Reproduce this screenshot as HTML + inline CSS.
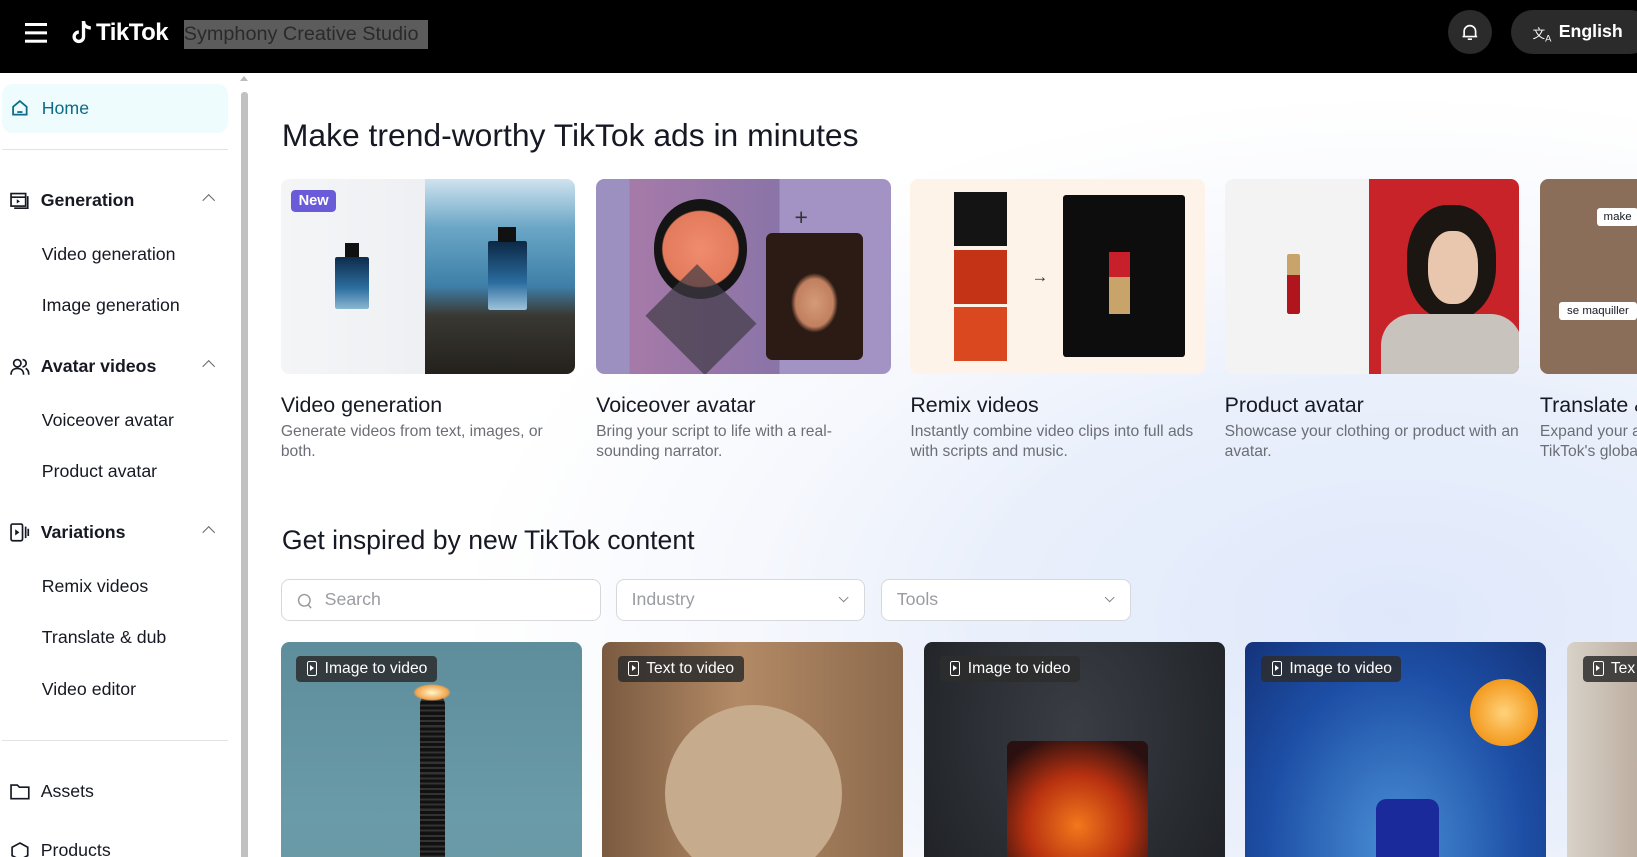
<!DOCTYPE html>
<html><head><meta charset="utf-8">
<style>
html{zoom:1.044}
*{box-sizing:border-box;margin:0;padding:0}
html,body{overflow:hidden}
body{width:1568px;height:821px;font-family:"Liberation Sans",Arial,sans-serif;background:#fff;position:relative;color:#161823}
.hdr{position:absolute;left:0;top:0;width:1568px;height:70px;background:#000}
.abs{position:absolute}
.side div.it{position:absolute;left:40px;font-size:17px;color:#161823}
.side div.grp{position:absolute;left:10px;font-size:17px;font-weight:bold;color:#161823;display:flex;align-items:center;gap:10px;width:200px}
.chev{position:absolute;right:6px;top:6px;width:9px;height:9px;border-left:1.5px solid #666;border-top:1.5px solid #666;transform:rotate(45deg)}
.main{position:absolute;left:240px;top:70px;width:1328px;height:800px;background:radial-gradient(ellipse 900px 500px at 1100px 520px,#dfe8fb 0%,#eaf0fb 45%,#f6f8fd 70%,#fff 100%)}
.card{position:absolute;top:171px;width:282px}
.card .img{height:187px;border-radius:8px;overflow:hidden;position:relative}
.card h3{position:absolute;top:205px;font-size:20.5px;font-weight:normal;color:#161823;white-space:nowrap}
.card p{position:absolute;top:233px;font-size:15px;line-height:19.5px;color:#6b6e75;width:262px}
.vc{position:absolute;top:615px;width:288px;height:280px;border-radius:8px;overflow:hidden}
.tag{position:absolute;left:15px;top:13px;height:25px;padding:0 9px 0 10px;background:rgba(45,45,45,.85);border-radius:4px;color:#fff;font-size:15px;line-height:25px;display:flex;align-items:center;gap:7px}
.tag i{display:inline-block;width:10px;height:14px;border:1.5px solid #fff;border-radius:2px;position:relative}
.tag i:after{content:"";position:absolute;left:2px;top:3px;border-left:4px solid #fff;border-top:3px solid transparent;border-bottom:3px solid transparent}
.f{position:absolute;top:555px;height:40px;background:#fff;border:1px solid #d6d8dc;border-radius:8px;font-size:17px;color:#9a9ca2;padding-left:14px;line-height:38px}
.f .dv{position:absolute;right:16px;top:13px;width:7px;height:7px;border-right:1.3px solid #888;border-bottom:1.3px solid #888;transform:rotate(45deg)}
</style></head><body>
<div class="hdr">
  <div class="abs" style="left:24px;top:22px;width:21px;height:2.5px;background:#fff;box-shadow:0 8px 0 #fff,0 16px 0 #fff"></div>
  <svg class="abs" style="left:68px;top:18px" width="22" height="25" viewBox="0 0 22 25"><path d="M12 2v15a4.5 4.5 0 1 1-4.5-4.5" fill="none" stroke="#fff" stroke-width="3.2"/><path d="M12 2c0 4 3 6.5 7 6.5" fill="none" stroke="#fff" stroke-width="3.2"/></svg>
  <div class="abs" style="left:92px;top:18px;color:#fff;font-weight:bold;font-size:23px;letter-spacing:-0.5px">TikTok</div>
  <div class="abs" style="left:176px;top:19px;height:28px;width:234px;background:#5c5c5c;color:#2a2a2a;font-size:19px;line-height:28px">Symphony Creative Studio</div>
  <div class="abs" style="left:1387px;top:10px;width:42px;height:42px;border-radius:50%;background:#2b2b2b"></div>
  <svg class="abs" style="left:1399px;top:22px" width="17" height="18" viewBox="0 0 17 18"><path d="M3 13V8a5.5 5.5 0 0 1 11 0v5zM1.5 13h14M6.5 15.5h4" fill="none" stroke="#fff" stroke-width="1.6"/></svg>
  <div class="abs" style="left:1447px;top:10px;width:135px;height:42px;border-radius:21px;background:#2b2b2b"></div>
  <div class="abs" style="left:1468px;top:22px;color:#fff;font-size:12px">文<sub style="font-size:9px">A</sub></div>
  <div class="abs" style="left:1493px;top:20px;color:#fff;font-size:17px;font-weight:bold">English</div>
</div>
<div class="side">
  <div class="abs" style="left:2px;top:80px;width:216px;height:47px;background:#eefcfd;border-radius:10px"></div>
  <svg class="abs" style="left:11px;top:95px" width="17" height="17" viewBox="0 0 17 17"><path d="M2 7.5L8.5 2 15 7.5V15H2z" fill="none" stroke="#0e6c87" stroke-width="1.7"/><path d="M6 12.5h5" stroke="#0e6c87" stroke-width="1.7"/></svg>
  <div class="abs" style="left:40px;top:94px;font-size:17px;color:#0e6c87">Home</div>
  <div class="abs" style="left:2px;top:143px;width:216px;height:1px;background:#e3e3e3"></div>
  <div class="grp" style="top:182px"><svg width="19" height="17" viewBox="0 0 19 17"><rect x="1" y="1.5" width="14" height="12" fill="none" stroke="#161823" stroke-width="1.6"/><path d="M1 5h14M4 15.5h13V4" fill="none" stroke="#161823" stroke-width="1.6"/><path d="M6.5 7v4l3-2z" fill="#161823"/></svg>Generation<span class="chev"></span></div>
  <div class="it" style="top:234px">Video generation</div>
  <div class="it" style="top:283px">Image generation</div>
  <div class="grp" style="top:341px"><svg width="19" height="17" viewBox="0 0 19 17"><circle cx="7" cy="5" r="3.5" fill="none" stroke="#161823" stroke-width="1.6"/><path d="M1 16c0-4 2.5-6 6-6s6 2 6 6M12 1.5a3.5 3.5 0 0 1 0 7M15 10c2 1 3 3 3 6" fill="none" stroke="#161823" stroke-width="1.6"/></svg>Avatar videos<span class="chev"></span></div>
  <div class="it" style="top:393px">Voiceover avatar</div>
  <div class="it" style="top:442px">Product avatar</div>
  <div class="grp" style="top:500px"><svg width="19" height="18" viewBox="0 0 19 18"><rect x="1" y="1" width="11" height="16" rx="1.5" fill="none" stroke="#161823" stroke-width="1.6"/><path d="M5 6v6l4-3z" fill="#161823"/><path d="M15 3.5v11M17.5 5.5v7" stroke="#161823" stroke-width="1.6"/></svg>Variations<span class="chev"></span></div>
  <div class="it" style="top:552px">Remix videos</div>
  <div class="it" style="top:601px">Translate &amp; dub</div>
  <div class="it" style="top:650px">Video editor</div>
  <div class="abs" style="left:2px;top:709px;width:216px;height:1px;background:#e3e3e3"></div>
  <div class="grp" style="top:748px;font-weight:normal"><svg width="19" height="16" viewBox="0 0 19 16"><path d="M1 2h6l2 2h9v11H1z" fill="none" stroke="#161823" stroke-width="1.6"/></svg>Assets</div>
  <div class="grp" style="top:805px;font-weight:normal"><svg width="19" height="18" viewBox="0 0 19 18"><path d="M9.5 1L17 5v8l-7.5 4L2 13V5z" fill="none" stroke="#161823" stroke-width="1.6"/></svg>Products</div>
  <div class="abs" style="left:230px;top:80px;width:8px;height:800px;background:#fff"></div>
  <div class="abs" style="left:231px;top:88px;width:7px;height:800px;background:#c1c1c1;border-radius:3px"></div>
  <div class="abs" style="left:230px;top:73px;border-left:4px solid transparent;border-right:4px solid transparent;border-bottom:5px solid #bbb"></div>
</div>
<div class="main"></div>
<div class="abs" style="left:270px;top:112px;font-size:30.5px;color:#161823">Make trend-worthy TikTok ads in minutes</div>

<div class="card" style="left:269px"><div class="img" style="background:linear-gradient(90deg,#f4f5f7 0,#eef0f3 138px,transparent 138px),linear-gradient(180deg,#cfe3ef 0,#6aa6c6 25%,#3e7fa8 55%,#3a3832 70%,#24211d 100%)">
  <div class="abs" style="left:10px;top:11px;background:#6a5bd8;color:#fff;font-weight:bold;font-size:14px;padding:3px 7px;border-radius:4px">New</div>
  <div class="abs" style="left:52px;top:75px;width:32px;height:50px;background:linear-gradient(#0e2b4a,#2d6fa0 60%,#8ab7d2);border-radius:2px"></div>
  <div class="abs" style="left:61px;top:62px;width:14px;height:13px;background:#111"></div>
  <div class="abs" style="left:198px;top:60px;width:38px;height:66px;background:linear-gradient(#0c2744,#2a6c9f 60%,#9ec3db);border-radius:2px"></div>
  <div class="abs" style="left:208px;top:46px;width:17px;height:15px;background:#111"></div>
</div><h3>Video generation</h3><p>Generate videos from text, images, or both.</p></div>

<div class="card" style="left:571px"><div class="img" style="background:linear-gradient(90deg,#9c90c0 0,#9c90c0 32px,#a67aa8 32px,#8a74a8 176px,#a293c4 176px)">
  <div class="abs" style="left:55px;top:20px;width:90px;height:95px;border-radius:50%;background:radial-gradient(circle,#f08c6e 0,#e37a5c 55%,#141414 57%)"></div>
  <div class="abs" style="left:60px;top:100px;width:80px;height:70px;background:#3e3a44;opacity:.7;transform:rotate(45deg)"></div>
  <div class="abs" style="left:163px;top:52px;width:93px;height:122px;border-radius:6px;background:radial-gradient(ellipse 30px 38px at 50% 55%,#d49a7a 0,#c1805f 60%,#2b1b14 75%),#e66ca6"></div>
  <div class="abs" style="left:190px;top:24px;font-size:22px;color:#333">+</div>
</div><h3>Voiceover avatar</h3><p>Bring your script to life with a real-sounding narrator.</p></div>

<div class="card" style="left:872px"><div class="img" style="background:#fdf3e8">
  <div class="abs" style="left:42px;top:13px;width:51px;height:52px;background:#141414"></div>
  <div class="abs" style="left:42px;top:68px;width:51px;height:52px;background:#c53317"></div>
  <div class="abs" style="left:42px;top:123px;width:51px;height:52px;background:#d9481e"></div>
  <div class="abs" style="left:116px;top:85px;font-size:16px;color:#333">→</div>
  <div class="abs" style="left:146px;top:16px;width:117px;height:155px;background:#0d0d0d;border-radius:3px"></div>
  <div class="abs" style="left:190px;top:70px;width:20px;height:60px;background:linear-gradient(#c8202a 40%,#c9a46a 40%)"></div>
</div><h3>Remix videos</h3><p style="width:280px">Instantly combine video clips into full ads with scripts and music.</p></div>

<div class="card" style="left:1173px"><div class="img" style="background:linear-gradient(90deg,#f3f3f3 0,#f3f3f3 138px,#c9232a 138px)">
  <div class="abs" style="left:60px;top:72px;width:12px;height:58px;background:linear-gradient(#c9a46a 35%,#b0141c 35%);border-radius:2px"></div>
  <div class="abs" style="left:175px;top:25px;width:85px;height:110px;border-radius:45%;background:#1c1612"></div>
  <div class="abs" style="left:195px;top:50px;width:48px;height:70px;border-radius:45%;background:#e9c6ae"></div>
  <div class="abs" style="left:150px;top:130px;width:135px;height:60px;background:#c9c3bd;border-radius:30px 30px 0 0"></div>
</div><h3>Product avatar</h3><p style="width:285px">Showcase your clothing or product with an avatar.</p></div>

<div class="card" style="left:1475px"><div class="img" style="background:#8a6e5a;border-radius:8px 0 0 8px">
  <div class="abs" style="left:55px;top:28px;background:#fff;font-size:11px;padding:3px 6px;border-radius:3px">make</div>
  <div class="abs" style="left:18px;top:118px;background:#fff;font-size:11px;padding:3px 8px;border-radius:3px;white-space:nowrap">se maquiller</div>
</div><h3>Translate &amp;</h3><p style="width:95px;overflow:hidden;white-space:nowrap">Expand your a<br>TikTok's globa</p></div>

<div class="abs" style="left:270px;top:503px;font-size:25.5px;color:#161823">Get inspired by new TikTok content</div>
<div class="f" style="left:269px;width:307px;padding-left:41px">Search<svg class="abs" style="left:15px;top:12px" width="15" height="16" viewBox="0 0 15 16"><circle cx="7" cy="7" r="5.5" fill="none" stroke="#999" stroke-width="1.4"/><path d="M10.5 11l3 3.5" stroke="#999" stroke-width="1.4"/></svg></div>
<div class="f" style="left:590px;width:239px">Industry<span class="dv"></span></div>
<div class="f" style="left:844px;width:239px">Tools<span class="dv"></span></div>

<div class="vc" style="left:269px;background:linear-gradient(#5e8d9c,#6a9ba8 60%,#6796a3)"><div class="abs" style="left:133px;top:50px;width:24px;height:230px;background:repeating-linear-gradient(0deg,#111 0 3px,#333 3px 5px);border-radius:10px 10px 0 0"></div><div class="abs" style="left:127px;top:40px;width:36px;height:16px;background:radial-gradient(#fff7d0,#f2a34a 60%,transparent 70%)"></div><div class="tag"><i></i>Image to video</div></div>
<div class="vc" style="left:577px;background:linear-gradient(90deg,#7a5a40,#b38a66 45%,#8c6a4c)"><div class="abs" style="left:60px;top:60px;width:170px;height:170px;border-radius:50%;background:#c6ab8d"></div><div class="tag"><i></i>Text to video</div></div>
<div class="vc" style="left:885px;background:radial-gradient(ellipse at 50% 30%,#3a3e44,#1b1d22)"><div class="abs" style="left:80px;top:95px;width:135px;height:180px;background:radial-gradient(circle at 50% 45%,#f2781c 0,#b83110 40%,#2a1010 75%);border-radius:6px"></div><div class="tag"><i></i>Image to video</div></div>
<div class="vc" style="left:1193px;background:radial-gradient(ellipse at 50% 70%,#4a8fd6,#1d4fa6 60%,#14337a)"><div class="abs" style="left:215px;top:35px;width:65px;height:65px;border-radius:50%;background:radial-gradient(#ffd27a,#f39a1f 70%)"></div><div class="abs" style="left:125px;top:150px;width:60px;height:130px;background:#1a2a9a;border-radius:10px"></div><div class="tag"><i></i>Image to video</div></div>
<div class="vc" style="left:1501px;width:80px;background:linear-gradient(90deg,#d8d2c8,#b8a89a)"><div class="tag" style="width:60px;overflow:hidden"><i></i>Tex</div></div>
</body></html>
